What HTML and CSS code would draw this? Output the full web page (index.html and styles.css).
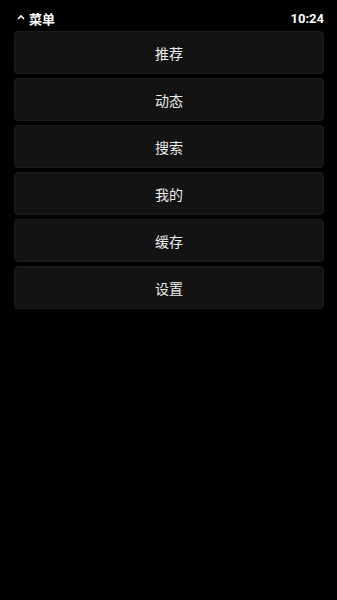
FILE: index.html
```html
<!DOCTYPE html>
<html>
<head>
<meta charset="utf-8">
<link rel="stylesheet" href="styles.css">
</head>
<body>
<div class="page">
  <div class="header">
    <div class="title">
      <svg class="caret" width="8" height="6" viewBox="0 0 8 6"><path d="M1 5 L4 2 L7 5" fill="none" stroke="#fff" stroke-width="1.6"/></svg>
      <span>菜单</span>
    </div>
    <div class="time">10:24</div>
  </div>
  <div class="menu">
    <div class="item">推荐</div>
    <div class="item">动态</div>
    <div class="item">搜索</div>
    <div class="item">我的</div>
    <div class="item">缓存</div>
    <div class="item">设置</div>
  </div>
</div>
</body>
</html>
```
FILE: styles.css
```css
html, body {
  margin: 0;
  padding: 0;
  background: #000;
  color: #fff;
  font-family: Roboto, "Noto Sans CJK SC", sans-serif;
}
.page {
  padding: 9px 13px 0 14px;
}
.header {
  display: flex;
  justify-content: space-between;
  align-items: center;
  height: 18px;
  margin-bottom: 4px;
}
.title {
  display: flex;
  align-items: center;
  gap: 4px;
  font-size: 13px;
  font-weight: bold;
  padding-left: 3px;
}
.caret {
  margin-top: -2px;
}
.time {
  font-size: 13px;
  font-weight: bold;
}
.menu {
  display: flex;
  flex-direction: column;
  gap: 4px;
}
.item {
  height: 41px;
  border: 1px solid #1c1c1c;
  border-radius: 4px;
  background: #131313;
  display: flex;
  align-items: center;
  justify-content: center;
  font-size: 14px;
  color: #eeeeee;
}
```
